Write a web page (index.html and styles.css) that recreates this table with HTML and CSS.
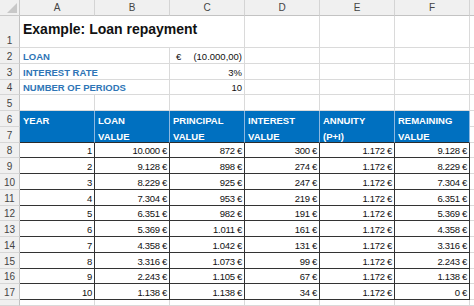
FILE: index.html
```html
<!DOCTYPE html>
<html lang="en">
<head>
<meta charset="utf-8">
<title>Loan repayment</title>
<link rel="stylesheet" href="styles.css">
</head>
<body>
<div class="sheet">
  <div class="corner"><svg width="12" height="12" viewBox="0 0 12 12"><polygon points="11,1 11,11 1,11" fill="#c8c8c8"/></svg></div>
  <div class="colhead">A</div>
  <div class="colhead">B</div>
  <div class="colhead">C</div>
  <div class="colhead">D</div>
  <div class="colhead">E</div>
  <div class="colhead">F</div>
  <div class="colhead"></div>

  <div class="rowhead">1</div>
  <div class="c title span3">Example: Loan repayment</div>
  <div class="c"></div><div class="c"></div><div class="c"></div><div class="c"></div>

  <div class="rowhead">2</div>
  <div class="c label span2">LOAN</div>
  <div class="c acct"><span>€</span><span>(10.000,00)</span></div>
  <div class="c"></div><div class="c"></div><div class="c"></div><div class="c"></div>

  <div class="rowhead">3</div>
  <div class="c label span2">INTEREST RATE</div>
  <div class="c num">3%</div>
  <div class="c"></div><div class="c"></div><div class="c"></div><div class="c"></div>

  <div class="rowhead">4</div>
  <div class="c label span2">NUMBER OF PERIODS</div>
  <div class="c num">10</div>
  <div class="c"></div><div class="c"></div><div class="c"></div><div class="c"></div>

  <div class="rowhead">5</div>
  <div class="c"></div><div class="c"></div><div class="c"></div><div class="c"></div><div class="c"></div><div class="c"></div><div class="c"></div>

  <div class="rowhead">6</div>
  <div class="hd">YEAR</div>
  <div class="hd">LOAN<br>VALUE</div>
  <div class="hd">PRINCIPAL<br>VALUE</div>
  <div class="hd">INTEREST<br>VALUE</div>
  <div class="hd">ANNUITY<br>(P+I)</div>
  <div class="hd">REMAINING<br>VALUE</div>
  <div class="c"></div>
  <div class="rowhead">7</div>
  <div class="c"></div>

  <div class="rowhead">8</div>
  <div class="c d">1</div><div class="c d">10.000 €</div><div class="c d">872 €</div><div class="c d">300 €</div><div class="c d">1.172 €</div><div class="c d">9.128 €</div><div class="c"></div>
  <div class="rowhead">9</div>
  <div class="c d">2</div><div class="c d">9.128 €</div><div class="c d">898 €</div><div class="c d">274 €</div><div class="c d">1.172 €</div><div class="c d">8.229 €</div><div class="c"></div>
  <div class="rowhead">10</div>
  <div class="c d">3</div><div class="c d">8.229 €</div><div class="c d">925 €</div><div class="c d">247 €</div><div class="c d">1.172 €</div><div class="c d">7.304 €</div><div class="c"></div>
  <div class="rowhead">11</div>
  <div class="c d">4</div><div class="c d">7.304 €</div><div class="c d">953 €</div><div class="c d">219 €</div><div class="c d">1.172 €</div><div class="c d">6.351 €</div><div class="c"></div>
  <div class="rowhead">12</div>
  <div class="c d">5</div><div class="c d">6.351 €</div><div class="c d">982 €</div><div class="c d">191 €</div><div class="c d">1.172 €</div><div class="c d">5.369 €</div><div class="c"></div>
  <div class="rowhead">13</div>
  <div class="c d">6</div><div class="c d">5.369 €</div><div class="c d">1.011 €</div><div class="c d">161 €</div><div class="c d">1.172 €</div><div class="c d">4.358 €</div><div class="c"></div>
  <div class="rowhead">14</div>
  <div class="c d">7</div><div class="c d">4.358 €</div><div class="c d">1.042 €</div><div class="c d">131 €</div><div class="c d">1.172 €</div><div class="c d">3.316 €</div><div class="c"></div>
  <div class="rowhead">15</div>
  <div class="c d">8</div><div class="c d">3.316 €</div><div class="c d">1.073 €</div><div class="c d">99 €</div><div class="c d">1.172 €</div><div class="c d">2.243 €</div><div class="c"></div>
  <div class="rowhead">16</div>
  <div class="c d">9</div><div class="c d">2.243 €</div><div class="c d">1.105 €</div><div class="c d">67 €</div><div class="c d">1.172 €</div><div class="c d">1.138 €</div><div class="c"></div>
  <div class="rowhead">17</div>
  <div class="c d">10</div><div class="c d">1.138 €</div><div class="c d">1.138 €</div><div class="c d">34 €</div><div class="c d">1.172 €</div><div class="c d">0 €</div><div class="c"></div>

  <div class="rowhead"></div>
  <div class="c"></div><div class="c"></div><div class="c"></div><div class="c"></div><div class="c"></div><div class="c"></div><div class="c"></div>
</div>
</body>
</html>
```
FILE: styles.css
```css
* { box-sizing: border-box; }
html, body { margin: 0; padding: 0; background: #fff; }
body { width: 474px; height: 306px; overflow: hidden; }

.sheet {
  display: grid;
  grid-template-columns: 20px repeat(6, 75px) 1fr;
  grid-template-rows: 16px 32px repeat(16, 15.75px) 1fr;
  height: 306px;
  font-family: "Liberation Sans", Arial, sans-serif;
  font-size: 9.5px;
  color: #111;
}

.corner {
  background: #f0f0f0;
  border-right: 1px solid #c9c9c9;
  border-bottom: 1px solid #c9c9c9;
  display: flex;
  align-items: flex-end;
  justify-content: flex-end;
  padding: 0 1px 1px 0;
}

.colhead {
  background: #f0f0f0;
  border-right: 1px solid #d4d4d4;
  border-bottom: 1px solid #c3c3c3;
  color: #444;
  font-size: 10px;
  display: flex;
  align-items: center;
  justify-content: center;
}

.rowhead {
  background: #f0f0f0;
  border-right: 1px solid #c3c3c3;
  border-bottom: 1px solid #d6d6d6;
  color: #444;
  font-size: 10px;
  line-height: 11px;
  display: flex;
  align-items: flex-end;
  justify-content: center;
  padding-bottom: 1px;
}

.c {
  border-right: 1px solid #dadada;
  border-bottom: 1px solid #dadada;
  display: flex;
  align-items: flex-end;
  padding: 0 2px 1px 3px;
  line-height: 11px;
  white-space: nowrap;
  overflow: hidden;
}

.span2 { grid-column: span 2; }
.span3 { grid-column: span 3; }

.title {
  align-items: flex-start;
  padding-top: 5px;
  font-size: 14px;
  line-height: 16px;
  font-weight: bold;
  color: #111;
}

.label {
  color: #2e75b6;
  font-weight: bold;
}

.num {
  justify-content: flex-end;
}

.acct {
  justify-content: space-between;
  padding-left: 6px;
}

.hd {
  grid-row: span 2;
  background: #0070c0;
  color: #fff;
  font-weight: bold;
  line-height: 15.75px;
  padding: 2px 2px 0 3px;
  border-right: 1px solid #8db8e0;
  border-bottom: 1px solid #2b2b2b;
  white-space: nowrap;
}

.d {
  justify-content: flex-end;
  border-right-color: #333;
  border-bottom-color: #333;
  letter-spacing: -0.3px;
  padding-right: 2px;
}
```
